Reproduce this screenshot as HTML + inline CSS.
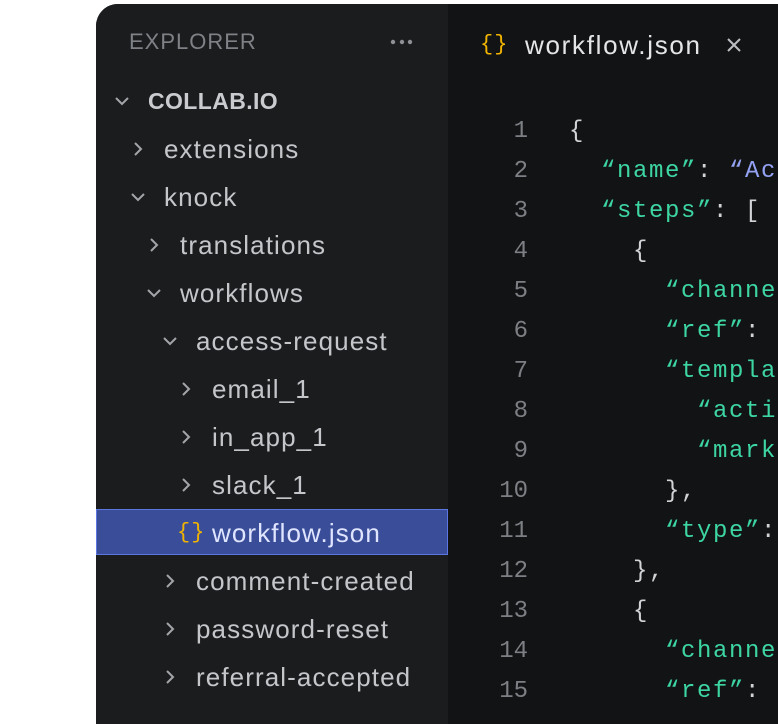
<!DOCTYPE html>
<html><head><meta charset="utf-8"><style>
html,body{margin:0;padding:0;background:#fff;width:778px;height:712px;overflow:hidden}
#panel{position:absolute;left:96px;top:4px;width:700px;height:720px;border-top-left-radius:22px;overflow:hidden;background:#121314}
#side{position:absolute;left:0;top:0;width:352px;height:100%;background:#1b1c1e}
.t{position:absolute;font-family:"Liberation Sans",sans-serif;font-size:26px;color:#c4c6ca;white-space:nowrap;line-height:30px;letter-spacing:1.1px}
.chev{position:absolute;width:14px;height:14px}
.sel{position:absolute;left:0;top:505px;width:350px;height:44px;background:#3a4d98;border:1px solid #5c76e2}
.code{position:absolute;font-family:"Liberation Mono",monospace;font-size:24px;letter-spacing:1.6px;white-space:pre;line-height:30px}
.ln{color:#7c7f84;text-align:right;width:60px;left:372px}
.k{color:#3dd6a3}.s{color:#93a2f2}.p{color:#d2d3d6}
.br{position:absolute;font-family:"Liberation Mono",monospace;font-size:22px;color:#f0b400;line-height:30px;letter-spacing:1px}
</style></head><body>
<div id="panel">
<div id="side">
<div class="t" style="left:33px;top:23px;color:#7e8185;font-size:22px;letter-spacing:1px">EXPLORER</div>
<svg style="position:absolute;left:294px;top:34px" width="24" height="8"><circle cx="3" cy="4" r="2.2" fill="#8d9094"/><circle cx="12" cy="4" r="2.2" fill="#8d9094"/><circle cx="20" cy="4" r="2.2" fill="#8d9094"/></svg>
<div class="sel"></div>
</div>
<div id="tree"></div>
<div class="br" style="left:384px;top:26px">{}</div>
<div class="t" style="left:429px;top:26px;color:#e4e5e7;letter-spacing:1.7px">workflow.json</div>
<svg style="position:absolute;left:630px;top:33px" width="16" height="16"><path d="M2 2L14 14M14 2L2 14" stroke="#bdbfc3" stroke-width="2"/></svg>
<div id="code"></div>
</div>
<script>
var rows=[[0,'d','COLLAB.IO'],[1,'r','extensions'],[1,'d','knock'],[2,'r','translations'],[2,'d','workflows'],[3,'d','access-request'],[4,'r','email_1'],[4,'r','in_app_1'],[4,'r','slack_1'],[4,'f','workflow.json'],[3,'r','comment-created'],[3,'r','password-reset'],[3,'r','referral-accepted']];
var h='';
rows.forEach(function(r,i){var cy=97+48*i;var cx=26+16*r[0];var tx=52+16*r[0];
if(r[1]=='f'){h+='<div class="br" style="left:'+(cx-9)+'px;top:'+(cy-15)+'px">{}</div>';}
else{var d=r[1]=='d'?'M1 4L7 10L13 4':'M4 1L10 7L4 13';h+='<svg class="chev" style="left:'+(cx-7)+'px;top:'+(cy-7)+'px"><path d="'+d+'" fill="none" stroke="#a3a5a9" stroke-width="2"/></svg>';}
var col=r[1]=='f'?'#dfe4ff':(i==0?'#c9cbcf':'#c4c6ca');
h+='<div class="t" style="left:'+tx+'px;top:'+(cy-15)+'px;color:'+col+(i==0?';font-weight:bold;font-size:23px;letter-spacing:0.4px':'')+'">'+r[2]+'</div>';});
document.getElementById('tree').innerHTML=h;
var L=[[0,'<span class="p">{</span>'],[1,'<span class="k">“name”</span><span class="p">: </span><span class="s">“Access request”</span>'],[1,'<span class="k">“steps”</span><span class="p">: [</span>'],[2,'<span class="p">{</span>'],[3,'<span class="k">“channel_key”</span>'],[3,'<span class="k">“ref”</span><span class="p">: </span>'],[3,'<span class="k">“template”</span>'],[4,'<span class="k">“action_url”</span>'],[4,'<span class="k">“markdown”</span>'],[3,'<span class="p">},</span>'],[3,'<span class="k">“type”</span><span class="p">: </span>'],[2,'<span class="p">},</span>'],[2,'<span class="p">{</span>'],[3,'<span class="k">“channel_key”</span>'],[3,'<span class="k">“ref”</span><span class="p">: </span>']];
var c='';L.forEach(function(l,i){var top=125+40*i-15+3;
c+='<div class="code ln" style="top:'+top+'px;letter-spacing:0">'+(i+1)+'</div>';
c+='<div class="code" style="left:'+(473+32*l[0])+'px;top:'+top+'px">'+l[1]+'</div>';});
document.getElementById('code').innerHTML=c;
</script>
</body></html>
